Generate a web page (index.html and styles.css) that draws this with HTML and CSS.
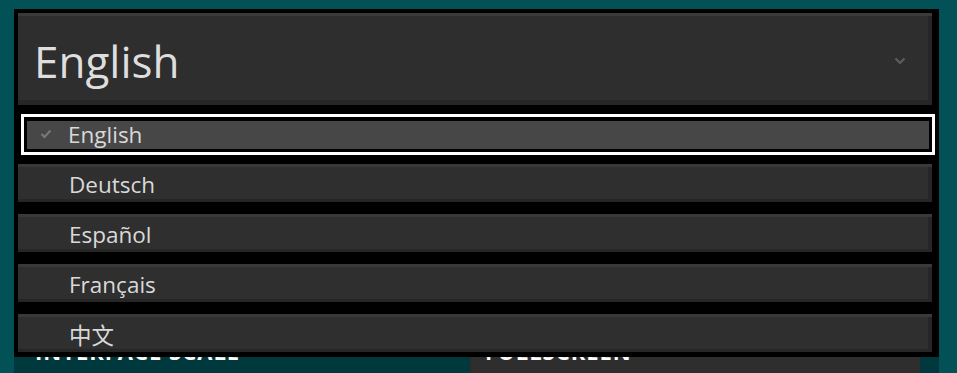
FILE: index.html
```html
<!DOCTYPE html>
<html lang="en">
<head>
<meta charset="utf-8">
<title>Language</title>
<link rel="stylesheet" href="styles.css">
</head>
<body>
<div class="screen">
  <div class="select">
    <div class="select-inner">
      <span class="select-value">English</span>
      <svg class="chevron" width="12" height="8" viewBox="0 0 12 8"><path d="M1.5 1.5 L6 6 L10.5 1.5" fill="none" stroke="#5c5c5c" stroke-width="2.2"/></svg>
    </div>
  </div>
  <div class="content">
    <div class="col col-left"><div class="label">INTERFACE SCALE</div></div>
    <div class="col col-right"><div class="label">FULLSCREEN</div></div>
  </div>
  <ul class="menu">
    <li class="item selected"><div class="item-inner"><svg class="check" width="12" height="10" viewBox="0 0 12 10"><path d="M1.5 5 L4.5 8 L10.5 1.5" fill="none" stroke="#7a7a7a" stroke-width="2"/></svg><span>English</span></div></li>
    <li class="item"><span>Deutsch</span></li>
    <li class="item"><span>Español</span></li>
    <li class="item"><span>Français</span></li>
    <li class="item"><span>中文</span></li>
  </ul>
</div>
</body>
</html>
```

FILE: styles.css
```css
* { box-sizing: border-box; }
html, body { margin: 0; padding: 0; }
body {
  width: 957px;
  height: 373px;
  overflow: hidden;
  background: #015157;
  font-family: "Open Sans", "Noto Sans", "Noto Sans CJK SC", sans-serif;
}
.screen {
  position: relative;
  width: 957px;
  height: 373px;
  padding: 9px 18px 0 14px;
}
.select {
  width: 925px;
  height: 99px;
  background: #000;
  padding: 4px 7px 3px 4px;
}
.select-inner {
  height: 92px;
  background: #2e2e2e;
  box-shadow: inset 0 3px 0 #3a3a3a, inset -4px -5px 0 #262626;
  display: flex;
  align-items: center;
  justify-content: space-between;
  padding: 4px 26px 0 16px;
}
.select-value {
  color: #dedede;
  font-size: 44px;
  line-height: 1;
}
.chevron { margin-top: -1px; }
.content {
  display: flex;
  height: 265px;
  background: #00393d;
}
.col { height: 100%; }
.col-left { width: 455px; padding: 232px 0 0 21px; }
.col-right {
  width: 451px;
  background: #2e2e2e;
  border-left: 2px solid #1e2e30;
  padding: 232px 0 0 14px;
}
.label {
  color: #fff;
  font-weight: 700;
  font-size: 22px;
  line-height: 1;
  letter-spacing: 1px;
}
.menu {
  position: absolute;
  left: 14px;
  top: 108px;
  width: 925px;
  height: 249px;
  margin: 0;
  padding: 6px 7px 5px 4px;
  list-style: none;
  background: #000;
  display: flex;
  flex-direction: column;
  gap: 12px;
}
.item {
  height: 38px;
  background: #2f2f2f;
  box-shadow: inset 0 3px 0 #393939, inset -4px -3px 0 #262626;
  display: flex;
  align-items: center;
  padding: 2px 0 0 51px;
  color: #d9d9d9;
  font-size: 22.5px;
}
.item.selected {
  height: 41px;
  margin: 0 -3px -3px 3px;
  border: 3px solid #fff;
  padding: 4px 3px 3px 3px;
  background: #000;
  box-shadow: none;
}
.item-inner {
  flex: 1;
  height: 100%;
  background: #474747;
  display: flex;
  align-items: center;
  padding-left: 13px;
}
.check { margin-right: 16px; margin-top: -2px; }
.item-inner span { margin-top: -2px; }
```
